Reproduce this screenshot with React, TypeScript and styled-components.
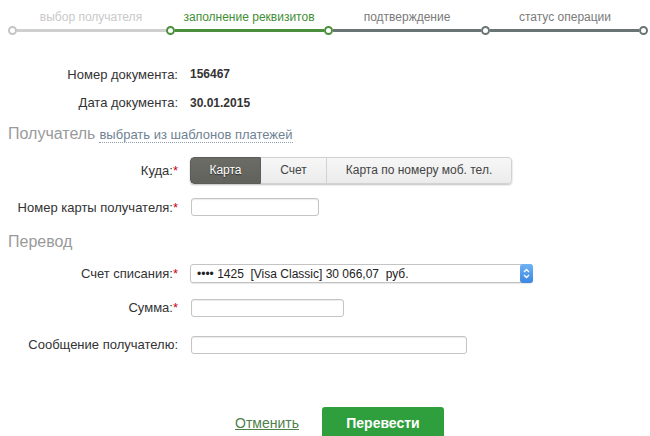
import React from 'react';
import styled, { createGlobalStyle } from 'styled-components';

const GlobalStyle = createGlobalStyle`
  body {
    margin: 0;
    background: #fff;
    font-family: "Liberation Sans", Arial, sans-serif;
    color: #333;
  }
`;

const Page = styled.div`
  width: 650px;
  height: 436px;
  overflow: hidden;
`;

/* stepper */
const Stepper = styled.div`
  padding: 0 2px 0 8px;
`;

const StepLabels = styled.div`
  display: grid;
  grid-template-columns: repeat(4, 1fr);
  padding: 10px 4px 0;
  line-height: 14px;
`;

const StepLabel = styled.div<{ $tone: 'done' | 'active' | 'todo' }>`
  text-align: center;
  font-size: 12px;
  color: ${({ $tone }) => ($tone === 'done' ? '#c9c9c9' : $tone === 'active' ? '#3f8f35' : '#7a7a7a')};
`;

const Track = styled.div`
  display: flex;
  align-items: center;
  height: 9px;
  margin-top: 2px;
`;

const Dot = styled.span<{ $color: string }>`
  width: 9px;
  height: 9px;
  box-sizing: border-box;
  border-radius: 50%;
  border: 2px solid ${({ $color }) => $color};
  background: #fff;
  flex: none;
`;

const Line = styled.span<{ $color: string }>`
  flex: 1;
  height: 3px;
  background: ${({ $color }) => $color};
`;

/* form */
const Form = styled.div`
  margin-top: 25px;
`;

const Row = styled.div<{ $h: number }>`
  display: grid;
  grid-template-columns: 178px 1fr;
  column-gap: 12px;
  align-items: center;
  height: ${({ $h }) => $h}px;
`;

const Label = styled.div`
  text-align: right;
  font-size: 13px;
  color: #333;
`;

const Req = styled.span`
  color: #d0021b;
`;

const Value = styled.div`
  font-size: 12px;
  font-weight: bold;
  color: #333;
`;

const Heading = styled.div<{ $h: number }>`
  display: flex;
  align-items: center;
  gap: 4px;
  height: ${({ $h }) => $h}px;
  padding-left: 8px;
  font-size: 16px;
  color: #9a9a9a;
`;

const TemplateLink = styled.a`
  font-size: 13px;
  color: #6f8293;
  text-decoration: none;
  border-bottom: 1px dotted #8fa0ae;
  line-height: 15px;
  margin-top: 2px;
`;

const Segments = styled.div`
  display: flex;
  height: 27px;
  border-radius: 4px;
  box-shadow: 0 1px 2px rgba(0, 0, 0, 0.25);
  width: max-content;
  overflow: hidden;
`;

const Segment = styled.button<{ $active?: boolean; $w: number }>`
  width: ${({ $w }) => $w}px;
  border: 1px solid ${({ $active }) => ($active ? '#5c5c58' : '#d2d2d2')};
  border-left-width: ${({ $active }) => ($active ? 1 : 0)}px;
  background: ${({ $active }) => ($active ? 'linear-gradient(#6c6c67, #62625d)' : 'linear-gradient(#f7f7f7, #ebebeb)')};
  color: ${({ $active }) => ($active ? '#fff' : '#444')};
  text-shadow: ${({ $active }) => ($active ? '0 1px 1px rgba(0,0,0,0.6)' : 'none')};
  font-family: inherit;
  font-size: 12px;
  padding: 0;
  &:first-child {
    border-radius: 4px 0 0 4px;
  }
  &:last-child {
    border-radius: 0 4px 4px 0;
  }
`;

const TextInput = styled.input<{ $w: number }>`
  width: ${({ $w }) => $w}px;
  height: 18px;
  box-sizing: border-box;
  border: 1px solid #c4c4c4;
  border-radius: 3px;
  box-shadow: inset 0 1px 1px rgba(0, 0, 0, 0.08);
  margin-left: 1px;
  padding: 0 4px;
`;

const Select = styled.div`
  position: relative;
  width: 343px;
  height: 19px;
  box-sizing: border-box;
  border: 1px solid #c4c4c4;
  border-radius: 3px;
  box-shadow: 0 1px 1px rgba(0, 0, 0, 0.1);
  display: flex;
  align-items: center;
  padding-left: 6px;
  font-size: 12px;
  color: #222;
  white-space: pre;
`;

const SelectArrow = styled.span`
  position: absolute;
  right: -1px;
  top: -1px;
  width: 13px;
  height: 19px;
  border-radius: 3px;
  background: linear-gradient(#6fb3f5, #3b86e0);
  display: flex;
  align-items: center;
  justify-content: center;
`;

const Footer = styled.div`
  display: flex;
  align-items: center;
  gap: 23px;
  margin-top: 44px;
  padding-left: 235px;
`;

const Cancel = styled.a`
  font-size: 14px;
  color: #4f7f4a;
  text-decoration: underline;
`;

const Submit = styled.button`
  width: 122px;
  height: 31px;
  border: none;
  border-radius: 3px;
  background: #2f9e3c;
  color: #fff;
  font-family: inherit;
  font-size: 14px;
  font-weight: bold;
`;

const steps = [
  { label: 'выбор получателя', tone: 'done' as const },
  { label: 'заполнение реквизитов', tone: 'active' as const },
  { label: 'подтверждение', tone: 'todo' as const },
  { label: 'статус операции', tone: 'todo' as const },
];

const dotColors = ['#c4c4c4', '#4b8f3c', '#4b8f3c', '#6b7474', '#6b7474'];
const lineColors = ['#cfcfcf', '#4b8f3c', '#6b7474', '#6b7474'];

export default function App() {
  return (
    <Page>
      <GlobalStyle />
      <Stepper>
        <StepLabels>
          {steps.map((s) => (
            <StepLabel key={s.label} $tone={s.tone}>{s.label}</StepLabel>
          ))}
        </StepLabels>
        <Track>
          {lineColors.map((c, i) => (
            <React.Fragment key={i}>
              <Dot $color={dotColors[i]} />
              <Line $color={c} />
            </React.Fragment>
          ))}
          <Dot $color={dotColors[4]} />
        </Track>
      </Stepper>

      <Form>
        <Row $h={28}>
          <Label>Номер документа:</Label>
          <Value>156467</Value>
        </Row>
        <Row $h={29}>
          <Label>Дата документа:</Label>
          <Value>30.01.2015</Value>
        </Row>
        <Heading $h={34}>
          Получатель <TemplateLink>выбрать из шаблонов платежей</TemplateLink>
        </Heading>
        <Row $h={38}>
          <Label>Куда:<Req>*</Req></Label>
          <Segments>
            <Segment $active $w={71}>Карта</Segment>
            <Segment $w={66}>Счет</Segment>
            <Segment $w={185}>Карта по номеру моб. тел.</Segment>
          </Segments>
        </Row>
        <Row $h={36}>
          <Label>Номер карты получателя:<Req>*</Req></Label>
          <TextInput $w={128} />
        </Row>
        <Heading $h={33}>Перевод</Heading>
        <Row $h={31}>
          <Label>Счет списания:<Req>*</Req></Label>
          <Select>
            {'•••• 1425  [Visa Classic] 30 066,07  руб.'}
            <SelectArrow>
              <svg width="7" height="11" viewBox="0 0 7 11">
                <path d="M1 4 L3.5 1.5 L6 4 M1 7 L3.5 9.5 L6 7" fill="none" stroke="#fff" strokeWidth="1.3" />
              </svg>
            </SelectArrow>
          </Select>
        </Row>
        <Row $h={37}>
          <Label>Сумма:<Req>*</Req></Label>
          <TextInput $w={153} />
        </Row>
        <Row $h={37}>
          <Label>Сообщение получателю:</Label>
          <TextInput $w={276} />
        </Row>
      </Form>

      <Footer>
        <Cancel>Отменить</Cancel>
        <Submit>Перевести</Submit>
      </Footer>
    </Page>
  );
}
